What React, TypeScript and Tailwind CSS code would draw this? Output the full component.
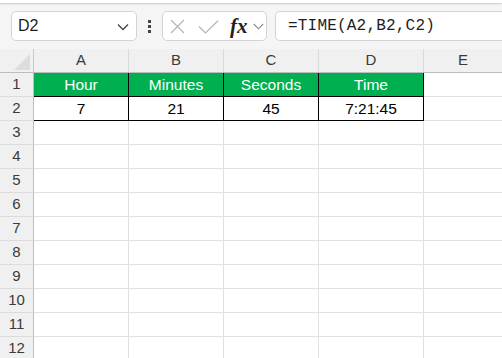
import React from "react";

const cols = [
  { l: "A", w: 95 },
  { l: "B", w: 95 },
  { l: "C", w: 95 },
  { l: "D", w: 105 },
  { l: "E", w: 79 },
];

const data: Record<number, string[]> = {
  1: ["Hour", "Minutes", "Seconds", "Time"],
  2: ["7", "21", "45", "7:21:45"],
};

export default function App() {
  const rows = Array.from({ length: 12 }, (_, i) => i + 1);
  return (
    <div className="w-[502px] h-[358px] overflow-hidden bg-white" style={{ fontFamily: '"Liberation Sans", Arial, sans-serif' }}>
      <div className="h-[3px] bg-white shadow-[0_1px_2px_rgba(0,0,0,0.18)] relative z-10" />
      <div className="h-[46px] bg-[#f5f5f5] flex items-start pt-[8px] pl-[11px] overflow-hidden">
        <div className="w-[126px] shrink-0 h-[30px] bg-white border border-[#d4d4d4] rounded-[5px] flex items-center justify-between pl-[6px] pr-[7px]">
          <span className="text-[16px] text-[#1f1f1f]">D2</span>
          <svg width="12" height="8" viewBox="0 0 12 8" className="mt-[1px]">
            <path d="M1 1.5 L6 6.5 L11 1.5" fill="none" stroke="#444" strokeWidth="1.3" />
          </svg>
        </div>
        <div className="w-[25px] shrink-0 h-[30px] flex flex-col items-center justify-center gap-[2px]">
          <div className="w-[3px] h-[3px] bg-[#444]" />
          <div className="w-[3px] h-[3px] bg-[#444]" />
          <div className="w-[3px] h-[3px] bg-[#444]" />
        </div>
        <div className="w-[105px] shrink-0 h-[30px] bg-white border border-[#d4d4d4] rounded-[5px] flex items-center pl-[7px]">
          <svg width="15" height="15" viewBox="0 0 15 15" className="shrink-0">
            <path d="M1 1 L14 14 M14 1 L1 14" stroke="#b5b5b5" strokeWidth="1.2" fill="none" />
          </svg>
          <svg width="21" height="14" viewBox="0 0 21 14" className="ml-[13px] mt-[1px] shrink-0">
            <path d="M1 6.5 L7.5 13 L20 0.8" stroke="#b5b5b5" strokeWidth="1.2" fill="none" />
          </svg>
          <span className="ml-[11px] text-[21px] italic font-bold text-[#222] leading-none" style={{ fontFamily: '"Liberation Serif", "Times New Roman", serif' }}>fx</span>
          <svg width="11" height="7" viewBox="0 0 11 7" className="ml-[5px] mt-[1px] shrink-0">
            <path d="M0.8 1 L5.5 5.8 L10.2 1" fill="none" stroke="#888" strokeWidth="1.1" />
          </svg>
        </div>
        <div className="ml-[8px] w-[260px] shrink-0 h-[30px] bg-white border border-[#d4d4d4] border-r-0 rounded-l-[5px] flex items-center pl-[12px]">
          <span className="text-[16px] text-[#1f1f1f] tracking-[0.2px]" style={{ fontFamily: '"Liberation Mono", "Courier New", monospace' }}>=TIME(A2,B2,C2)</span>
        </div>
      </div>
      {/* column headers */}
      <div className="flex h-[24px] bg-[#f0f0f0] border-b border-[#bdbdbd]">
        <div className="w-[34px] shrink-0 h-full border-r border-[#c8c8c8] flex items-end justify-end pr-[3px] pb-[2px]">
          <svg width="16" height="16" viewBox="0 0 16 16">
            <path d="M16 0 L16 16 L0 16 Z" fill="#dcdcdc" />
          </svg>
        </div>
        {cols.map((c) => (
          <div key={c.l} style={{ width: c.w }} className="h-full border-r border-[#dadada] flex items-center justify-center text-[15px] text-[#3a3a3a] shrink-0">
            {c.l}
          </div>
        ))}
      </div>
      {rows.map((r) => (
        <div key={r} className="flex h-[24px]">
          <div className="w-[34px] shrink-0 h-full bg-[#f0f0f0] border-r border-b border-r-[#bdbdbd] border-b-[#dcdcdc] flex items-center justify-center text-[15px] text-[#3a3a3a]">
            {r}
          </div>
          {cols.map((c, ci) => {
            const v = data[r]?.[ci];
            const inTable = (r === 1 || r === 2) && ci < 4;
            const green = r === 1 && ci < 4;
            return (
              <div
                key={c.l}
                style={{ width: c.w }}
                className={
                  "h-full shrink-0 border-r border-b flex items-center justify-center text-[15.5px] " +
                  (inTable ? "border-black " : "border-[#e1e1e1] ") +
                  (green ? "bg-[#00b050] text-white" : "text-black")
                }
              >
                {v}
              </div>
            );
          })}
        </div>
      ))}
    </div>
  );
}
